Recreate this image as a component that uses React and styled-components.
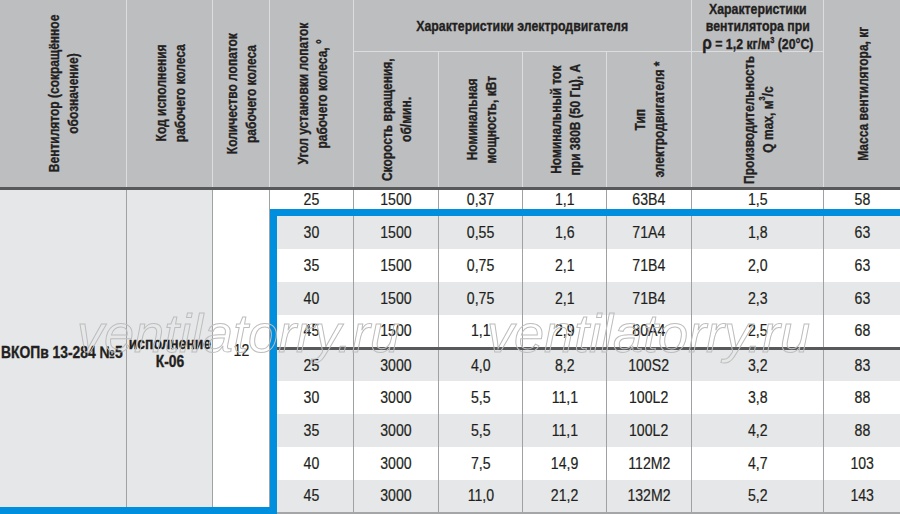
import styled, { createGlobalStyle } from "styled-components";

const GlobalStyle = createGlobalStyle`
  html, body {
    margin: 0;
    padding: 0;
    background: #fff;
  }
  body {
    font-family: "Liberation Sans", Arial, sans-serif;
    color: #231f20;
  }
`;

const BLUE = "#008fdf";

const firstRow = ["25", "1500", "0,37", "1,1", "63B4", "1,5", "58"];

const slowRows = [
    ["30", "1500", "0,55", "1,6", "71A4", "1,8", "63"],
    ["35", "1500", "0,75", "2,1", "71B4", "2,0", "63"],
    ["40", "1500", "0,75", "2,1", "71B4", "2,3", "63"],
    ["45", "1500", "1,1", "2,9", "80A4", "2,5", "68"],
];

const fastRows = [
    ["25", "3000", "4,0", "8,2", "100S2", "3,2", "83"],
    ["30", "3000", "5,5", "11,1", "100L2", "3,8", "88"],
    ["35", "3000", "5,5", "11,1", "100L2", "4,2", "88"],
    ["40", "3000", "7,5", "14,9", "112M2", "4,7", "103"],
    ["45", "3000", "11,0", "21,2", "132M2", "5,2", "143"],
];

// the print uses a condensed face, so glyphs are squeezed sideways
const DataRow = ({ values, shade, pad }) =>
    values.map((v, i) => (
        <Cell key={i} $shade={shade} $pad={pad} $last={i === values.length - 1}>
            <Narrow>{v}</Narrow>
        </Cell>
    ));

const App = () => {
    return (
        <>
            <GlobalStyle />
            <Page>
                <Table>
                    {/* header, first line */}
                    <HeadCell $rows={2}>
                        <VText>Вентилятор (сокращённое<br />обозначение)</VText>
                    </HeadCell>
                    <HeadCell $rows={2}>
                        <VText>Код исполнения<br />рабочего колеса</VText>
                    </HeadCell>
                    <HeadCell $rows={2}>
                        <VText>Количество лопаток<br />рабочего колеса</VText>
                    </HeadCell>
                    <HeadCell $rows={2}>
                        <VText>Угол установки лопаток<br />рабочего колеса, °</VText>
                    </HeadCell>
                    <HeadCell $cols={4} $group>
                        <Narrow $k={0.82}>Характеристики электродвигателя</Narrow>
                    </HeadCell>
                    <HeadCell $group>
                        <GroupText>
                            Характеристики<br />вентилятора при<br />
                            <Rho>ρ</Rho> = 1,2 кг/м<sup>3</sup> (20°С)
                        </GroupText>
                    </HeadCell>
                    <HeadCell $rows={2} $last>
                        <VText>Масса вентилятора, кг</VText>
                    </HeadCell>

                    {/* header, second line */}
                    <HeadCell>
                        <VText>Скорость вращения,<br />об/мин.</VText>
                    </HeadCell>
                    <HeadCell>
                        <VText>Номинальная<br />мощность, кВт</VText>
                    </HeadCell>
                    <HeadCell>
                        <VText>Номинальный ток<br />при 380В (50 Гц), А</VText>
                    </HeadCell>
                    <HeadCell>
                        <VText>Тип<br />электродвигателя *</VText>
                    </HeadCell>
                    <HeadCell>
                        <VText>Производительность<br />Q max, м<sup>3</sup>/с</VText>
                    </HeadCell>

                    <Rule $from={1} />

                    {/* merged cells */}
                    <Merged $shade $align="flex-start">
                        <Strong $origin="left center">ВКОПв 13-284 №5</Strong>
                    </Merged>
                    <Merged $shade>
                        <Strong>исполнение<br />К-06</Strong>
                    </Merged>
                    <Merged>
                        <Narrow>12</Narrow>
                    </Merged>

                    <DataRow values={firstRow} pad={7} />
                    {slowRows.map((r, i) => (
                        <DataRow key={"s" + i} values={r} shade={i % 2 === 0} />
                    ))}
                    <Rule $from={4} />
                    {fastRows.map((r, i) => (
                        <DataRow key={"f" + i} values={r} shade={i % 2 === 0} />
                    ))}
                </Table>

                <Frame />
                <FrameFoot />
                <Watermark $left={77}>ventilatorry.ru</Watermark>
                <Watermark $left={487}>ventilatorry.ru</Watermark>
            </Page>
        </>
    );
};

export default App;

// ================== STYLES ==================
const Page = styled.div`
    position: relative;
    width: 900px;
    height: 514px;
    overflow: hidden;
    background: #fff;
`;

const Table = styled.div`
    display: grid;
    grid-template-columns: 127px 86px 57px 84px 85px 84px 84px 85px 132px 76px;
    grid-template-rows: 52px 135px 3px 26px 33px 33px 33px 32px 3px 31px 33px 33px 33px 32px;
    border-bottom: 2px solid #a5a6a8;
`;

const HeadCell = styled.div`
    box-sizing: border-box;
    grid-row: span ${(p) => p.$rows || 1};
    grid-column: span ${(p) => p.$cols || 1};
    display: flex;
    align-items: center;
    justify-content: center;
    background: #bdbec0;
    border-right: ${(p) => (p.$last ? "none" : "1px solid #dcdddf")};
    border-bottom: ${(p) => (p.$group ? "1px solid #dcdddf" : "none")};
    font-size: 15px;
    font-weight: bold;
    line-height: 19px;
    text-align: center;
    white-space: nowrap;
    -webkit-text-stroke: 0.35px #231f20;

    sup {
        font-size: 9px;
        line-height: 0;
    }
`;

const VText = styled.div`
    writing-mode: vertical-rl;
    transform: rotate(180deg) scaleY(0.8);
    text-align: center;
    flex-shrink: 0;
`;

const GroupText = styled.div`
    line-height: 17px;
    padding-top: 1px;
    transform: scaleX(0.82);
`;

const Rho = styled.span`
    font-size: 19px;
`;

const Narrow = styled.span`
    display: inline-block;
    transform: scaleX(${(p) => p.$k || 0.83});
    white-space: nowrap;
`;

const Rule = styled.div`
    grid-column: ${(p) => p.$from} / -1;
    background: #58595b;
`;

const Merged = styled.div`
    box-sizing: border-box;
    grid-row: span 11;
    display: flex;
    align-items: center;
    justify-content: ${(p) => p.$align || "center"};
    padding-left: 1px;
    background: ${(p) => (p.$shade ? "#e6e7e8" : "#fff")};
    border-right: 1px solid #a0a1a3;
    font-size: 17px;
    text-align: center;
    -webkit-text-stroke: 0.2px #231f20;
`;

const Strong = styled.div`
    font-weight: bold;
    font-size: 16.5px;
    line-height: 18px;
    white-space: nowrap;
    transform: scaleX(0.84);
    transform-origin: ${(p) => p.$origin || "center"};
    padding-top: 2px;
    -webkit-text-stroke: 0.35px #231f20;
`;

const Cell = styled.div`
    box-sizing: border-box;
    display: flex;
    align-items: center;
    justify-content: center;
    padding-bottom: ${(p) => p.$pad || 0}px;
    background: ${(p) => (p.$shade ? "#e6e7e8" : "#fff")};
    border-right: ${(p) => (p.$last ? "none" : "1px solid #a0a1a3")};
    font-size: 17px;
    -webkit-text-stroke: 0.2px #231f20;
`;

const Frame = styled.div`
    position: absolute;
    left: 270px;
    top: 209px;
    right: 0;
    bottom: 0;
    border-top: 7px solid ${BLUE};
    border-left: 7px solid ${BLUE};
    pointer-events: none;
`;

const FrameFoot = styled.div`
    position: absolute;
    left: 0;
    bottom: 0;
    width: 277px;
    height: 7px;
    background: ${BLUE};
`;

const Watermark = styled.span`
    position: absolute;
    top: 306px;
    left: ${(p) => p.$left}px;
    font-family: "Liberation Sans", sans-serif;
    font-style: italic;
    font-size: 54px;
    line-height: 54px;
    color: transparent;
    -webkit-text-stroke: 1px #bdbdbd;
    pointer-events: none;
    white-space: nowrap;
`;
